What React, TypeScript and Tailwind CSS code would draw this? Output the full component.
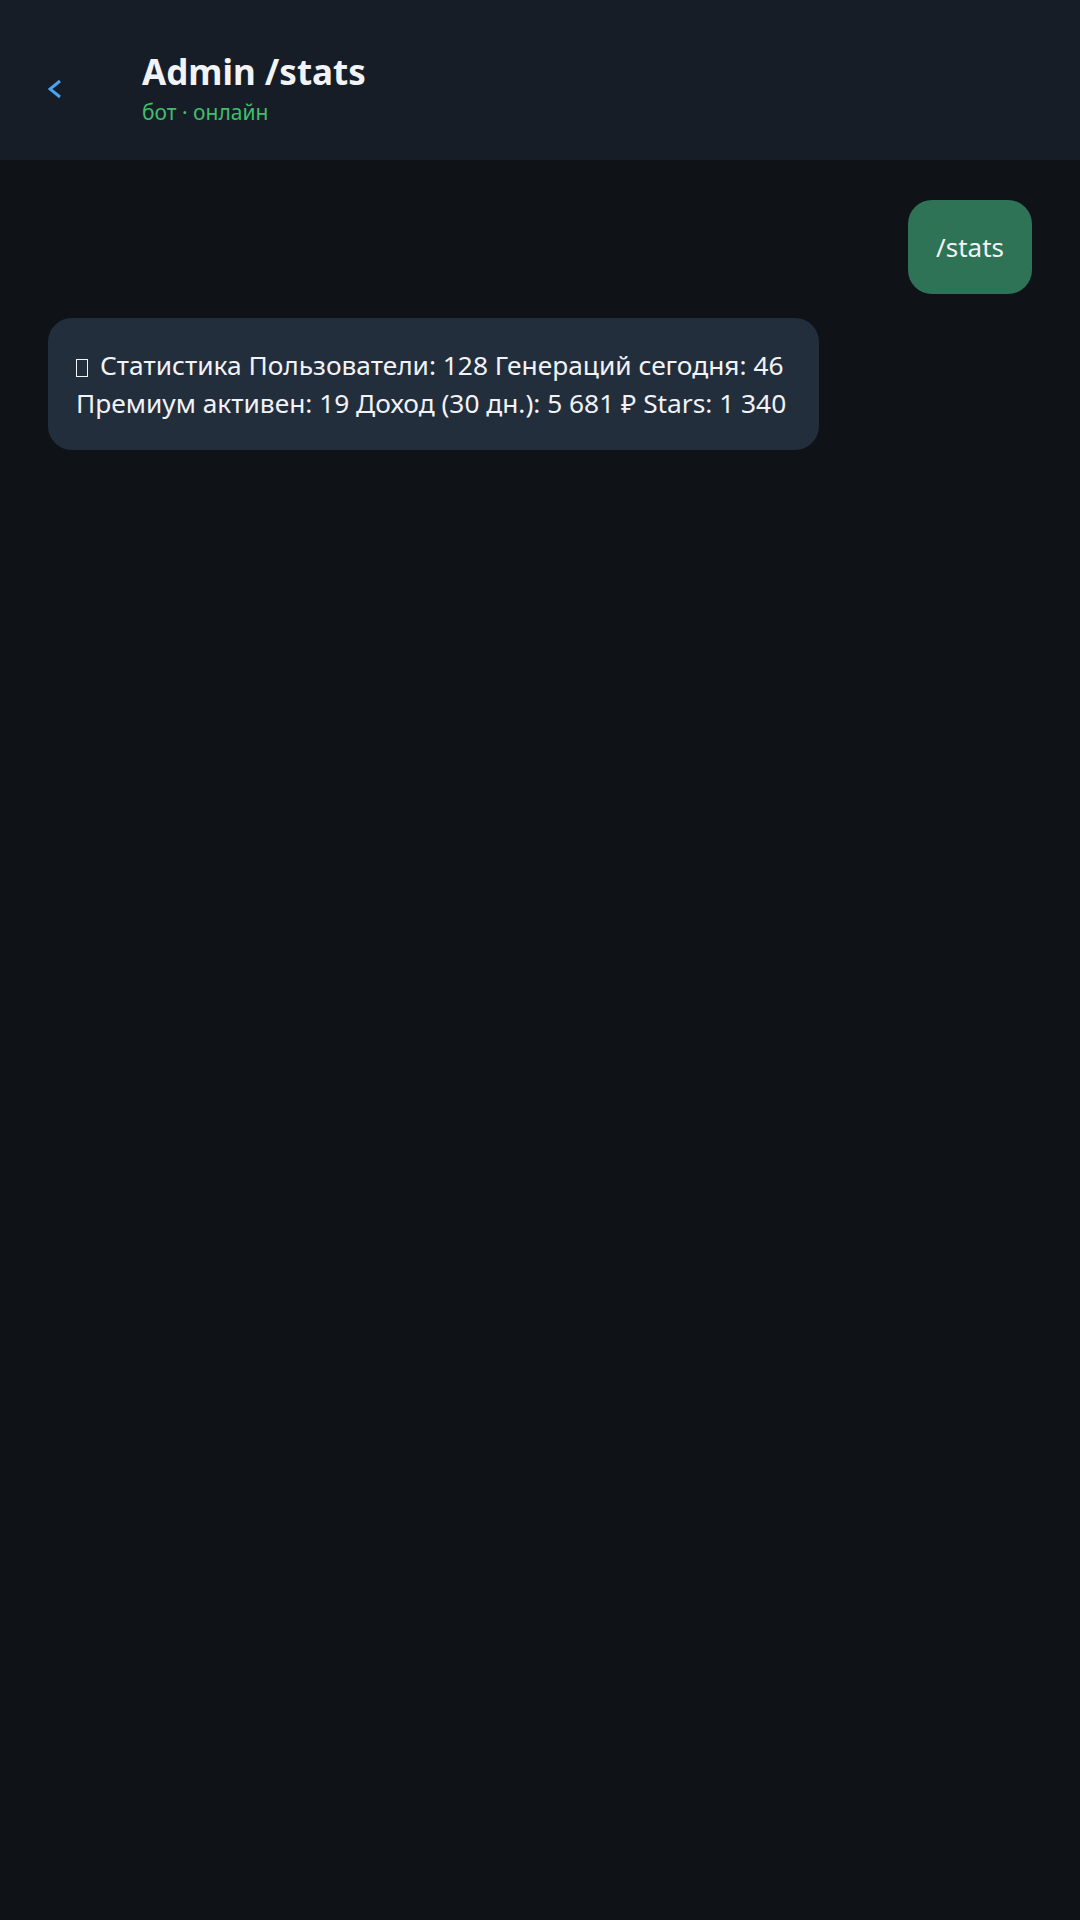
import { useState } from 'react'

export default function App() {
  const [messages] = useState([
    { id: 1, from: 'me', lines: ['/stats'] },
    {
      id: 2,
      from: 'bot',
      lines: [
        'Статистика Пользователи: 128 Генераций сегодня: 46',
        'Премиум активен: 19 Доход (30 дн.): 5 681 ₽ Stars: 1 340',
      ],
    },
  ])

  return (
    <div className="min-h-screen bg-[#0f1318] text-[#f1f3f6] font-['Noto_Sans',sans-serif]">
      <header className="h-[160px] bg-[#171d26] flex items-center px-12 pt-[18px] gap-12">
        <button className="w-[46px] h-[46px] flex items-center">
          <svg width="14" height="20" viewBox="0 0 14 20" fill="none">
            <polyline points="12,2 2,10 12,18" stroke="#4aa3f2" strokeWidth="3" strokeLinejoin="miter" />
          </svg>
        </button>
        <div className="flex flex-col mb-[1px]">
          <h1 className="text-[35px] leading-[44px] font-bold">Admin /stats</h1>
          <p className="mt-[3px] text-[21px] leading-[30px] text-[#3fbd6c]">бот · онлайн</p>
        </div>
      </header>

      <main className="flex flex-col gap-6 px-12 pt-10">
        {messages.map((m) =>
          m.from === 'me' ? (
            <div key={m.id} className="self-end bg-[#2e7355] rounded-[24px] p-7 text-[26px] leading-[38px]">
              {m.lines[0]}
            </div>
          ) : (
            <div key={m.id} className="self-start w-[771px] bg-[#232e3d] rounded-[24px] p-7 text-[26.3px] leading-[38px]">
              <div>
                <span className="inline-block w-[12px] h-[18px] border-[1.5px] border-[#f1f3f6] mr-[12px] align-[-2px]" />
                {m.lines[0]}
              </div>
              <div>{m.lines[1]}</div>
            </div>
          )
        )}
      </main>
    </div>
  )
}
